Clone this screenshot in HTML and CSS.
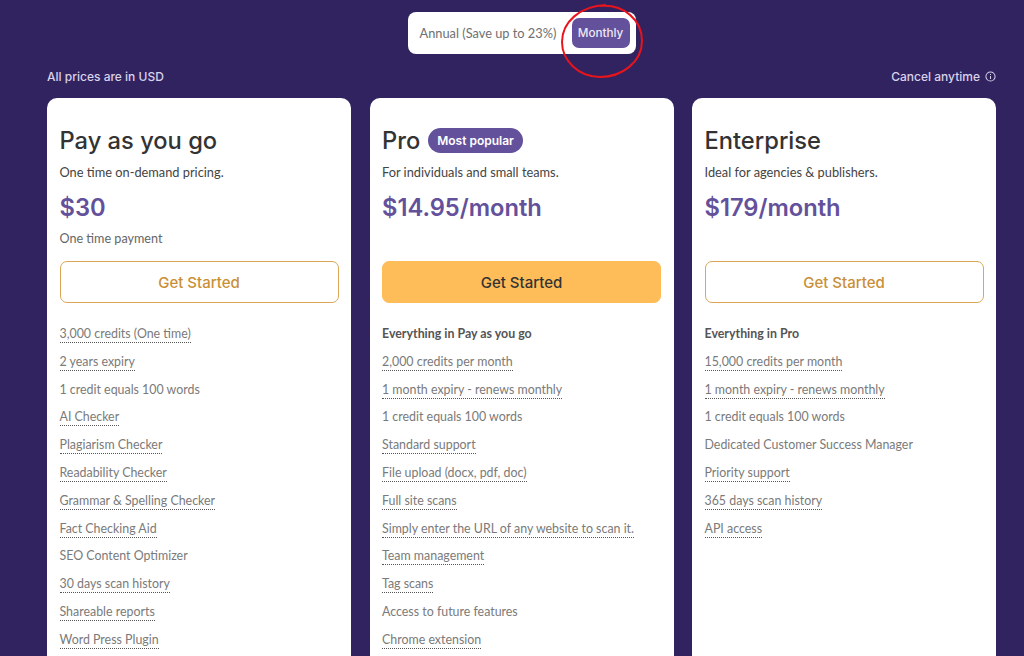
FILE: index.html
```html
<!DOCTYPE html>
<html lang="en">
<head>
<meta charset="utf-8">
<title>Pricing</title>
<link rel="stylesheet" href="styles.css">
</head>
<body>
<main class="page">
  <div class="toggle-row">
    <div class="toggle">
      <span class="opt">Annual (Save up to 23%)</span>
      <span class="opt-active">Monthly</span>
      <svg class="circle" width="86" height="80" viewBox="0 0 86 80"><path d="M40 6C64 4 82 20 82 41C82 62 62 77 40 77C18 77 2 60 2 42C2 22 20 6 46 5" fill="none" stroke="#e8141c" stroke-width="2"/></svg>
    </div>
  </div>
  <div class="notes">
    <span>All prices are in USD</span>
    <span class="cancel">Cancel anytime
      <svg width="11" height="11" viewBox="0 0 12 12"><circle cx="6" cy="6" r="5" fill="none" stroke="currentColor" stroke-width="1.1"/><path d="M6 5.4V8.6M6 3.3V4.3" stroke="currentColor" stroke-width="1.1" fill="none"/></svg>
    </span>
  </div>
  <div class="cards">
    <section class="card">
      <div class="head"><h2>Pay as you go</h2></div>
      <p class="desc">One time on-demand pricing.</p>
      <div class="price">$30</div>
      <p class="sub">One time payment</p>
      <a class="btn">Get Started</a>
      <ul>
        <li><span class="tip">3,000 credits (One time)</span></li>
        <li><span class="tip">2 years expiry</span></li>
        <li>1 credit equals 100 words</li>
        <li><span class="tip">AI Checker</span></li>
        <li><span class="tip">Plagiarism Checker</span></li>
        <li><span class="tip">Readability Checker</span></li>
        <li><span class="tip">Grammar &amp; Spelling Checker</span></li>
        <li><span class="tip">Fact Checking Aid</span></li>
        <li>SEO Content Optimizer</li>
        <li><span class="tip">30 days scan history</span></li>
        <li><span class="tip">Shareable reports</span></li>
        <li><span class="tip">Word Press Plugin</span></li>
      </ul>
    </section>
    <section class="card">
      <div class="head"><h2>Pro</h2><span class="badge">Most popular</span></div>
      <p class="desc">For individuals and small teams.</p>
      <div class="price">$14.95/month</div>
      <p class="sub"></p>
      <a class="btn btn-solid">Get Started</a>
      <ul>
        <li class="lead">Everything in Pay as you go</li>
        <li><span class="tip">2,000 credits per month</span></li>
        <li><span class="tip">1 month expiry - renews monthly</span></li>
        <li>1 credit equals 100 words</li>
        <li><span class="tip">Standard support</span></li>
        <li><span class="tip">File upload (docx, pdf, doc)</span></li>
        <li><span class="tip">Full site scans</span></li>
        <li><span class="tip">Simply enter the URL of any website to scan it.</span></li>
        <li><span class="tip">Team management</span></li>
        <li><span class="tip">Tag scans</span></li>
        <li>Access to future features</li>
        <li><span class="tip">Chrome extension</span></li>
      </ul>
    </section>
    <section class="card">
      <div class="head"><h2>Enterprise</h2></div>
      <p class="desc">Ideal for agencies &amp; publishers.</p>
      <div class="price">$179/month</div>
      <p class="sub"></p>
      <a class="btn">Get Started</a>
      <ul>
        <li class="lead">Everything in Pro</li>
        <li><span class="tip">15,000 credits per month</span></li>
        <li><span class="tip">1 month expiry - renews monthly</span></li>
        <li>1 credit equals 100 words</li>
        <li>Dedicated Customer Success Manager</li>
        <li><span class="tip">Priority support</span></li>
        <li><span class="tip">365 days scan history</span></li>
        <li><span class="tip">API access</span></li>
      </ul>
    </section>
  </div>
</main>
</body>
</html>
```
FILE: styles.css
```css
* { box-sizing: border-box; }
html, body { margin: 0; height: 656px; overflow: hidden; }
body { background: #312360; font-family: "Lato", "Liberation Sans", sans-serif; color: #333; }
.page { padding: 12px 28px 0 47px; height: 656px; overflow: hidden; }
.toggle-row { display: flex; justify-content: center; height: 42px; }
.toggle { position: relative; width: 228px; height: 42px; background: #fff; border-radius: 8px; display: flex; align-items: center; justify-content: space-between; padding: 0 6px 0 12px; font-size: 12.8px; }
.opt { color: #6f6f6f; }
.opt-active { width: 58px; height: 30px; border-radius: 7px; background: #63519b; color: #eee9f7; font-family: "Inter", sans-serif; font-size: 11.7px; font-weight: 500; display: flex; align-items: center; justify-content: center; }
.circle { position: absolute; left: 152px; top: -12px; }
.notes { display: flex; justify-content: space-between; align-items: center; height: 44px; font-family: "Inter", sans-serif; font-size: 12px; font-weight: 500; color: #d9d2ea; padding-top: 1px; }
.cancel { display: flex; align-items: center; gap: 5px; }
.cards { display: grid; grid-template-columns: repeat(3, 304px); column-gap: 18.5px; }
.card { background: #fff; border-radius: 10px; height: 600px; padding: 0 12.5px; }
.head { display: flex; align-items: center; gap: 8px; height: 57px; padding-top: 28px; }
h2 { margin: 0; font-family: "Inter", sans-serif; font-size: 23.7px; font-weight: 500; color: #333; line-height: 1; }
.badge { background: #63519b; color: #fff; font-family: "Inter", sans-serif; font-size: 12px; font-weight: 600; height: 25px; padding: 0 9px; border-radius: 13px; display: flex; align-items: center; }
.desc { margin: 0; height: 38px; font-size: 12.8px; color: #444; line-height: 34px; }
.price { height: 30px; font-family: "Inter", sans-serif; font-size: 23.7px; font-weight: 600; line-height: 30px; color: #63519b; }
.sub { margin: 0; height: 38px; padding-top: 7px; font-size: 12.6px; line-height: 18px; color: #666; }
.btn { display: flex; align-items: center; justify-content: center; height: 42px; border: 1px solid #dba655; border-radius: 7px; font-family: "Inter", sans-serif; font-size: 15px; font-weight: 500; color: #c98f37; }
.btn-solid { background: #ffbd59; border-color: #ffbd59; color: #333; }
ul { list-style: none; margin: 0; padding: 17px 0 0; font-size: 12.4px; color: #7a7a7a; }
li { height: 27.8px; line-height: 27.8px; white-space: nowrap; }
.tip { border-bottom: 1px dotted #555; padding-bottom: 1px; }
.lead { font-weight: 700; color: #555; }
```
